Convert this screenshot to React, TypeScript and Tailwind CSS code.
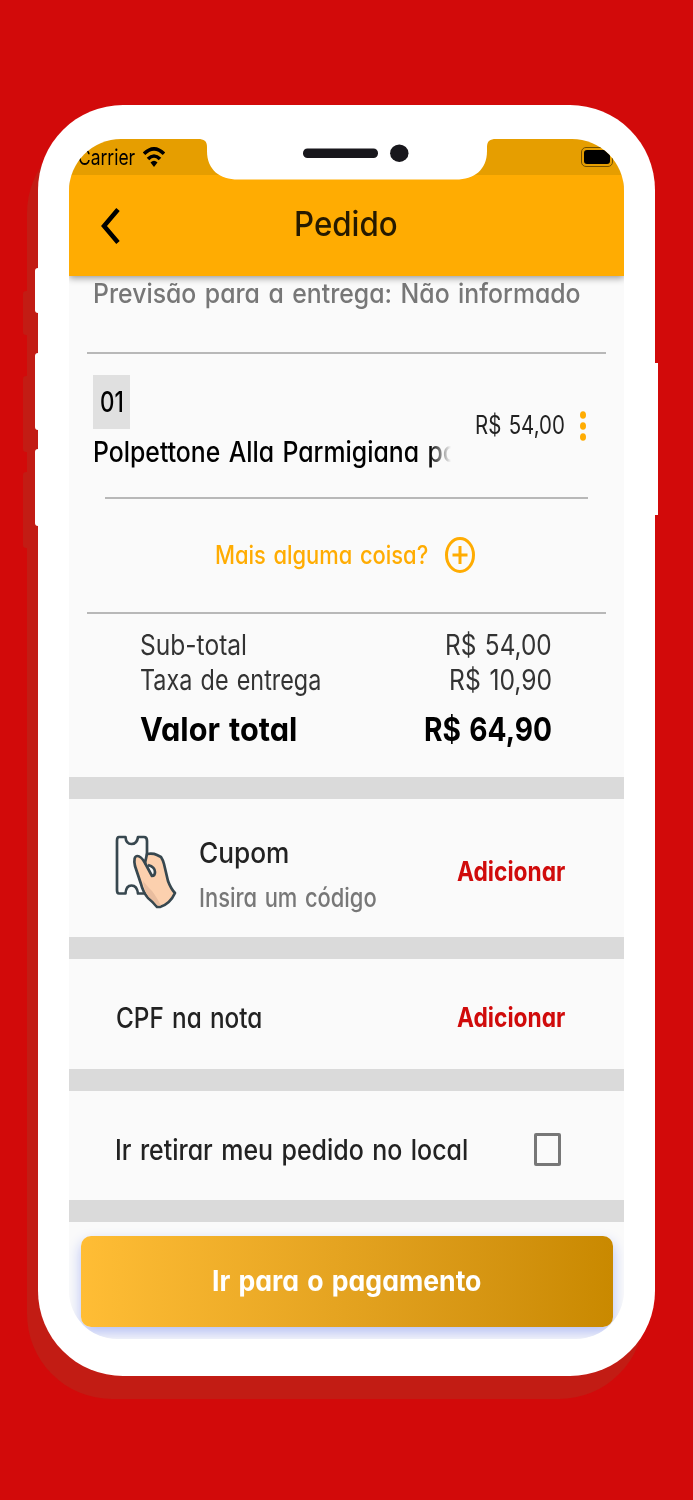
import { useLayoutEffect, useRef, useState } from "react";

type FitProps = { w: number; className?: string; right?: boolean; plain?: boolean; children: string };

/* A single line of condensed text that fills exactly w pixels. */
function Fit({ w, className = "", right = false, plain = false, children }: FitProps) {
  const ref = useRef<HTMLSpanElement>(null);
  const [scale, setScale] = useState(1);
  useLayoutEffect(() => {
    if (ref.current) setScale(w / ref.current.offsetWidth);
  }, [w, children]);
  return (
    <span className={`flex shrink-0 ${right ? "justify-end" : ""}`} style={{ width: w }}>
      <span
        ref={ref}
        className={`block shrink-0 whitespace-pre [word-spacing:2px] ${right ? "origin-right" : "origin-left"} ${plain ? "" : "[font-feature-settings:'cv11']"} ${className}`}
        style={{ transform: `scaleX(${scale})` }}
      >
        {children}
      </span>
    </span>
  );
}

function Band() {
  return <div className="h-[22px] shrink-0 bg-[#dadada]" />;
}

function CouponIcon() {
  return (
    <svg className="h-[74px] w-[62px] shrink-0" viewBox="0 0 62 74" fill="none" stroke="#37474f" strokeWidth="2.7" strokeLinejoin="round">
      <path d="M4 2H10.500Q11 9 16.500 9Q22 9 23 2H29Q32 2 32 6V58.500H23Q22 50.500 16.500 50.500Q11 50.500 10.500 58.500H4Q2 58.500 2 55V6Q2 2 4 2Z" fill="#fafafa" />
      <path d="M30 28L32 19Q38 18 42 20L46 22Q48 25 49 29L53 46Q56 54 60 58Q55 69 45 72H42Q38 67 33 63Q28 57 26 49L20 31Q18 21 22.500 21Q26 21 30 28Z" fill="#fcd0ae" />
      <path d="M28 46L34 53Q39 57 46 70.500L42 70Q39 66 34 62Q29 56 28 46Z" fill="#e9bd9f" stroke="none" />
      <path d="M30 28L37 41Q40 41 40 37Q40 32 33 30" fill="#fafafa" />
    </svg>
  );
}

function StatusBar() {
  return (
    <div className="flex h-9 shrink-0 items-center bg-[#e69e00] pl-[9px]">
      <Fit w={57} plain className="text-[22px] leading-9 text-black">Carrier</Fit>
      <svg className="ml-2 h-5 w-[22px]" viewBox="0 0 22 20" fill="none" stroke="#000" strokeWidth="3.600">
        <path d="M1 6.800Q11 -3 21 6.800" />
        <path d="M5 12Q11 6 17 12" />
        <path d="M11 20L7.500 15.500Q11 12 14.500 15.500Z" fill="#000" stroke="none" />
      </svg>
      <div className="mr-[11px] ml-auto h-5 w-8 rounded-[5px] border border-[#735000] p-[2px]">
        <div className="h-full w-full rounded-[3px] bg-black" />
      </div>
    </div>
  );
}

function Header() {
  return (
    <div className="relative z-10 flex h-[101px] shrink-0 items-center bg-[#ffac02] shadow-[0_2px_7px_rgba(0,0,0,0.4)] [clip-path:inset(0_0_-20px_0)]">
      <svg className="ml-8 h-9 w-[19px]" viewBox="0 0 19 36" fill="none" stroke="#000" strokeWidth="4.500">
        <path d="M17 1.500L3 18L17 34.500" />
      </svg>
      <div className="ml-[174px] pb-[4px]">
        <Fit w={104} className="text-[34px] leading-[60px] font-[450] text-[#261a00]">Pedido</Fit>
      </div>
    </div>
  );
}

function Notch() {
  return (
    <div className="absolute top-0 left-[129px] z-20 h-[41px] w-[298px]">
      <svg className="block h-full w-full" viewBox="0 0 298 41">
        <path d="M0 0C6 0 9 2 9 8V12C9 31 22 40.500 40 40.500H258C276 40.500 289 31 289 12V8C289 2 292 0 298 0V-1H0Z" fill="#fff" />
        <rect x="105" y="9.500" width="75" height="9.500" rx="4.500" fill="#18171c" />
        <ellipse cx="201.300" cy="14.200" rx="9.200" ry="8.700" fill="#18171c" />
      </svg>
    </div>
  );
}

function Phone() {
  return (
    <div className="relative h-[1271px] w-[617px] rounded-[85px] bg-white px-[31px] pt-[34px] shadow-[-11px_23px_0_#c21c14]">
      <div className="relative flex h-[1200px] w-[555px] flex-col overflow-hidden rounded-t-[52px] rounded-b-[48px] bg-[#fafafa] font-['Inter',sans-serif]">
        <StatusBar />
        <Header />
        <div className="flex h-[76px] shrink-0 items-start px-6">
          <Fit w={488} className="text-[27px] leading-[35px] font-[450] text-[#777]">Previsão para a entrega: Não informado</Fit>
        </div>
        <div className="mx-[18px] h-[2px] shrink-0 bg-[#b8b8b8]" />
        <div className="flex h-[143px] shrink-0 items-center pr-9 pl-6">
          <div className="w-[358px] shrink-0 self-start pt-[21px]">
            <div className="flex h-[54px] w-[37px] items-center justify-center bg-[#e0e0e0]">
              <Fit w={24} className="text-[28px] leading-[50px] font-[450] text-black">01</Fit>
            </div>
            <div className="w-[358px] overflow-hidden [mask-image:linear-gradient(to_right,black_94%,transparent)]">
              <Fit w={365} className="text-[28px] leading-[46px] font-[450] text-black">Polpettone Alla Parmigiana po</Fit>
            </div>
          </div>
          <div className="ml-6 shrink-0 pb-[2px]">
            <Fit w={90} className="text-[25px] leading-10 text-[#222]">R$ 54,00</Fit>
          </div>
          <svg className="ml-[15px] h-[30px] w-[6px] shrink-0" viewBox="0 0 6 30" fill="#ffac02">
            <ellipse cx="3" cy="4" rx="3" ry="3.800" />
            <ellipse cx="3" cy="15" rx="3" ry="3.800" />
            <ellipse cx="3" cy="26" rx="3" ry="3.800" />
          </svg>
        </div>
        <div className="mx-9 h-[2px] shrink-0 bg-[#b8b8b8]" />
        <div className="flex h-[113px] shrink-0 items-center pb-px pl-[146px]">
          <Fit w={213} className="text-[25px] leading-10 font-medium text-[#ffac02]">Mais alguma coisa?</Fit>
          <svg className="ml-[17px] h-9 w-[30px]" viewBox="0 0 30 36" fill="none" stroke="#ffac02" strokeWidth="3">
            <ellipse cx="15" cy="18" rx="13.500" ry="16.500" />
            <path d="M7.500 18H22.500M15 9V27" />
          </svg>
        </div>
        <div className="mx-[18px] h-[2px] shrink-0 bg-[#b8b8b8]" />
        <div className="flex h-[163px] shrink-0 flex-col pt-[14px] pr-[72px] pl-[71px]">
          <div className="flex justify-between">
            <Fit w={107} plain className="text-[28px] leading-[35px] text-[#333]">Sub-total</Fit>
            <Fit w={107} plain right className="text-[28px] leading-[35px] text-[#333]">R$ 54,00</Fit>
          </div>
          <div className="flex justify-between">
            <Fit w={181} plain className="text-[28px] leading-[35px] text-[#333]">Taxa de entrega</Fit>
            <Fit w={103} plain right className="text-[28px] leading-[35px] text-[#333]">R$ 10,90</Fit>
          </div>
          <div className="mt-[6px] flex justify-between">
            <Fit w={157} className="text-[33px] leading-[50px] font-bold text-black">Valor total</Fit>
            <Fit w={128} right className="text-[33px] leading-[50px] font-bold text-black">R$ 64,90</Fit>
          </div>
        </div>
        <Band />
        <div className="flex h-[138px] shrink-0 items-center pr-[59px] pl-[46px]">
          <div className="pt-[7px]">
            <CouponIcon />
          </div>
          <div className="ml-[22px] flex flex-col pt-[13px]">
            <Fit w={90} className="text-[28px] leading-[45px] font-[450] text-[#222]">Cupom</Fit>
            <Fit w={178} className="text-[26px] leading-[43px] font-[450] text-[#777]">Insira um código</Fit>
          </div>
          <div className="ml-auto pt-2">
            <Fit w={108} className="text-[27px] leading-10 font-bold text-[#d00b0b]">Adicionar</Fit>
          </div>
        </div>
        <Band />
        <div className="flex h-[110px] shrink-0 items-center justify-between pt-[7px] pr-[59px] pl-[47px]">
          <Fit w={146} className="text-[28px] leading-10 font-[450] text-[#222]">CPF na nota</Fit>
          <Fit w={108} className="text-[27px] leading-10 font-bold text-[#d00b0b]">Adicionar</Fit>
        </div>
        <Band />
        <div className="flex h-[109px] shrink-0 items-center justify-between pt-[8px] pr-[63px] pl-[46px]">
          <Fit w={353} className="text-[28px] leading-10 font-[450] text-[#222]">Ir retirar meu pedido no local</Fit>
          <div className="h-[33px] w-[27px] rounded-[2px] border-[3px] border-[#777]" />
        </div>
        <Band />
        <div className="flex shrink-0 pt-[14px] pl-3">
          <div className="flex h-[91px] w-[532px] items-center justify-center rounded-[10px] bg-linear-to-r from-[#ffbd35] to-[#c98900] pr-[2px] pb-[2px] shadow-[0_6px_14px_#b4bff5]">
            <Fit w={269} className="text-[28px] leading-10 font-bold text-white">Ir para o pagamento</Fit>
          </div>
        </div>
        <Notch />
      </div>
    </div>
  );
}

export default function App() {
  return (
    <div className="relative h-[1500px] w-[693px] overflow-hidden bg-[#d20a0a] pt-[105px] pl-[38px]">
      <div className="absolute top-[291px] left-[23px] h-[44px] w-3 rounded-l-[3px] bg-[#c21c14]" />
      <div className="absolute top-[376px] left-[23px] h-[76px] w-3 rounded-l-[3px] bg-[#c21c14]" />
      <div className="absolute top-[472px] left-[23px] h-[76px] w-3 rounded-l-[3px] bg-[#c21c14]" />
      <Phone />
      <div className="absolute top-[268px] left-[35px] h-[45px] w-3 rounded-l-[3px] bg-white" />
      <div className="absolute top-[353px] left-[35px] h-[77px] w-3 rounded-l-[3px] bg-white" />
      <div className="absolute top-[449px] left-[35px] h-[77px] w-3 rounded-l-[3px] bg-white" />
      <div className="absolute top-[363px] left-[650px] h-[152px] w-2 bg-white" />
    </div>
  );
}
